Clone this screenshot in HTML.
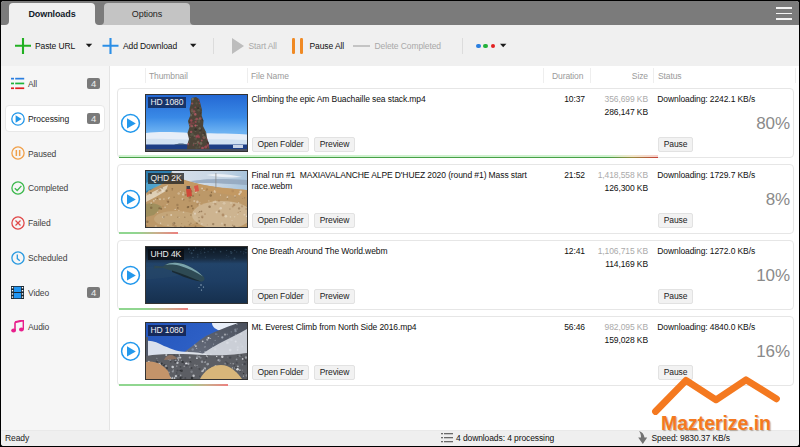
<!DOCTYPE html>
<html><head><meta charset="utf-8">
<style>
*{margin:0;padding:0;box-sizing:border-box}
html,body{width:800px;height:447px;overflow:hidden;background:#000}
body{font-family:"Liberation Sans",sans-serif;font-size:8.5px;color:#101010;position:relative;letter-spacing:-0.1px}
.a{position:absolute}
.t{position:absolute;white-space:nowrap;line-height:10px}
#win{left:1px;top:1px;width:798px;height:445px;background:#f0f0f0;border-radius:3px;overflow:hidden}
#tabbar{left:1px;top:1px;width:798px;height:24px;background:#7b7b7b;border-radius:3px 3px 0 0}
.tab{top:3px;height:22px;border-radius:4px 4px 0 0;text-align:center;line-height:22px;font-size:9px}
#sidebar{left:1px;top:66px;width:109px;height:364px;background:#f6f6f6;border-right:1px solid #e4e4e4}
#content{left:110px;top:66px;width:689px;height:364px;background:#fff}
#status{left:1px;top:430px;width:798px;height:16px;background:#efefef;border-top:1px solid #e9e9e9;border-radius:0 0 3px 3px}
.hdr{color:#9a9a9a;top:71px}
.dv{width:1px;height:15px;background:#eeeeee;top:68px}
.card{left:117px;width:677px;height:70px;border:1px solid #e6e6e6;border-radius:4px;background:#fff}
.btn{height:15px;border:1px solid #e2e2e2;border-radius:2px;background:#f2f2f2;line-height:13px;text-align:center;color:#222}
.thumb{left:145px;width:103px;height:58px;border:1px solid #333;overflow:hidden}
.lbl{position:absolute;left:2px;top:2px;height:11px;padding:0 2.5px;background:rgba(10,20,50,.72);color:#f0f0f0;font-size:8.5px;line-height:11px;white-space:nowrap}
.pct{font-size:17px;color:#8a8a8a;text-align:right;line-height:18px}
.badge{left:87px;width:13px;height:11px;background:#7a7a7a;border-radius:2px;color:#eee;text-align:center;line-height:11px;font-size:9.5px;font-weight:normal}
.prog{height:1px;left:119px}
.glow{height:2px;left:119px;opacity:.55}
.prog2{height:2px;left:119px;background:linear-gradient(to right,#90d690 0,#90d690 calc(100% - 42px),#c8b08c calc(100% - 22px),#ec8080 100%)}
.gray{color:#aaa}
.prog{background:linear-gradient(to right,#48a048 0,#48a048 calc(100% - 50px),#9a8a40 calc(100% - 25px),#c84038 100%)}
.glow{background:linear-gradient(to right,#a8e8a8 0,#a8e8a8 calc(100% - 50px),#e8d0a0 calc(100% - 25px),#f0a8a0 100%)}
.sl{left:28px;color:#3e3e3e}
</style></head><body>
<div id="win" class="a"></div>
<div id="tabbar" class="a"></div>
<div class="a tab" style="left:9px;width:86px;background:#f0f0f0;font-weight:bold;color:#12202a">Downloads</div>
<div class="a tab" style="left:104px;width:86px;background:#c4c4c4;color:#1e1e1e">Options</div>
<div class="a" style="left:5px;top:21px;width:4px;height:4px;background:#f0f0f0"><div style="width:4px;height:4px;background:#7b7b7b;border-bottom-right-radius:4px"></div></div>
<div class="a" style="left:95px;top:21px;width:4px;height:4px;background:#f0f0f0"><div style="width:4px;height:4px;background:#7b7b7b;border-bottom-left-radius:4px"></div></div>
<div class="a" style="left:100px;top:21px;width:4px;height:4px;background:#c4c4c4"><div style="width:4px;height:4px;background:#7b7b7b;border-bottom-right-radius:4px"></div></div>
<div class="a" style="left:190px;top:21px;width:4px;height:4px;background:#c4c4c4"><div style="width:4px;height:4px;background:#7b7b7b;border-bottom-left-radius:4px"></div></div>
<div class="a" style="left:776px;top:7px;width:16px;height:2px;background:#f4f4f4"></div>
<div class="a" style="left:776px;top:12.5px;width:16px;height:1.8px;background:#f4f4f4"></div>
<div class="a" style="left:776px;top:18px;width:16px;height:2px;background:#f4f4f4"></div>

<!-- toolbar -->
<svg class="a" style="left:15px;top:38px" width="16" height="16"><path d="M0 7.7H16M8 0V16" stroke="#22b022" stroke-width="2.1"/></svg>
<div class="t" style="left:35px;top:40.7px">Paste URL</div>
<svg class="a" style="left:85px;top:43px" width="8" height="6"><path d="M0.8 0.8H7.2L4 4.3Z" fill="#1a1a1a"/></svg>
<svg class="a" style="left:102px;top:38px" width="17" height="16"><path d="M0.5 7.7H16.5M8.5 0V16" stroke="#2b8ee6" stroke-width="2.1"/></svg>
<div class="t" style="left:123px;top:40.7px">Add Download</div>
<svg class="a" style="left:189px;top:43px" width="8" height="6"><path d="M1 0.8H7.4L4.2 4.3Z" fill="#1a1a1a"/></svg>
<div class="a" style="left:213px;top:38px;width:1px;height:16px;background:#dcdcdc"></div>
<svg class="a" style="left:232px;top:38px" width="12" height="16"><path d="M0 0L12 8L0 16Z" fill="#bdbdbd"/></svg>
<div class="t" style="left:248.5px;top:40.7px;color:#a8a8a8">Start All</div>
<div class="a" style="left:292px;top:38px;width:2.5px;height:16px;background:#f08a24;border-radius:1.2px"></div>
<div class="a" style="left:300.2px;top:38px;width:2.5px;height:16px;background:#f08a24;border-radius:1.2px"></div>
<div class="t" style="left:309.5px;top:40.7px">Pause All</div>
<div class="a" style="left:353px;top:45px;width:17px;height:2px;background:#c4c4c4"></div>
<div class="t" style="left:374.5px;top:40.7px;color:#a8a8a8">Delete Completed</div>
<div class="a" style="left:462px;top:38px;width:1px;height:16px;background:#dcdcdc"></div>
<div class="a" style="left:476.2px;top:43.5px;width:4.4px;height:4.4px;border-radius:50%;background:#2a7fe0"></div>
<div class="a" style="left:483.4px;top:43.5px;width:4.4px;height:4.4px;border-radius:50%;background:#22b23a"></div>
<div class="a" style="left:490.6px;top:43.5px;width:4.4px;height:4.4px;border-radius:50%;background:#e22020"></div>
<svg class="a" style="left:499px;top:43px" width="8" height="6"><path d="M1 0.8H7.4L4.2 4.3Z" fill="#1a1a1a"/></svg>

<div id="sidebar" class="a"></div>
<div id="content" class="a"></div>
<div id="status" class="a"></div>
<div class="a" style="left:5px;top:105px;width:100px;height:27px;background:#fff;border:1px solid #e8e8e8;border-radius:4px"></div>
<svg class="a" style="left:11px;top:77px" width="14" height="13">
 <rect x="0" y="0.8" width="3" height="1.7" fill="#2a7fe0"/><rect x="4.2" y="0.8" width="9" height="1.7" fill="#2a7fe0"/>
 <rect x="0" y="5.6" width="3" height="1.7" fill="#22b23a"/><rect x="4.2" y="5.6" width="9" height="1.7" fill="#22b23a"/>
 <rect x="0" y="10.4" width="3" height="1.7" fill="#e22020"/><rect x="4.2" y="10.4" width="9" height="1.7" fill="#e22020"/>
</svg>
<div class="t sl" style="top:79px">All</div>
<div class="a badge" style="top:78px">4</div>
<svg class="a" style="left:10.5px;top:111.5px" width="14" height="14"><circle cx="7" cy="7" r="6.2" fill="none" stroke="#2196e8" stroke-width="1.3"/><path d="M4.6 3.3L10.6 7L4.6 10.7Z" fill="#2196e8"/></svg>
<div class="t sl" style="top:114px;color:#1a1a1a">Processing</div>
<div class="a badge" style="top:113px">4</div>
<svg class="a" style="left:10.5px;top:146px" width="14" height="14"><circle cx="7" cy="7" r="6.1" fill="none" stroke="#f0a04a" stroke-width="1.3"/><rect x="4.6" y="4" width="1.5" height="6" fill="#f0a04a"/><rect x="7.9" y="4" width="1.5" height="6" fill="#f0a04a"/></svg>
<div class="t sl" style="top:148.5px">Paused</div>
<svg class="a" style="left:10.5px;top:180.5px" width="14" height="14"><circle cx="7" cy="7" r="6.1" fill="none" stroke="#3cb84c" stroke-width="1.3"/><path d="M3.8 7.2L6.2 9.5L10.4 4.9" fill="none" stroke="#3cb84c" stroke-width="1.3"/></svg>
<div class="t sl" style="top:183px">Completed</div>
<svg class="a" style="left:10.5px;top:215.5px" width="14" height="14"><circle cx="7" cy="7" r="6.1" fill="none" stroke="#e04848" stroke-width="1.3"/><path d="M4.5 4.5L9.5 9.5M9.5 4.5L4.5 9.5" fill="none" stroke="#e04848" stroke-width="1.2"/></svg>
<div class="t sl" style="top:218px">Failed</div>
<svg class="a" style="left:10.5px;top:250.5px" width="14" height="14"><circle cx="7" cy="7" r="6.1" fill="none" stroke="#2a9ae0" stroke-width="1.3"/><path d="M6.3 3.5V7.6L8.8 9.8" fill="none" stroke="#2a9ae0" stroke-width="1.3"/></svg>
<div class="t sl" style="top:253px">Scheduled</div>
<svg class="a" style="left:11px;top:286px" width="13" height="13"><rect x="0" y="0" width="13" height="13" fill="#1b2a36"/><rect x="3" y="0.8" width="7" height="5.2" fill="#2196f3"/><rect x="3" y="7" width="7" height="5.2" fill="#2196f3"/>
<rect x="0.8" y="1" width="1.4" height="1.4" fill="#fff"/><rect x="0.8" y="4" width="1.4" height="1.4" fill="#fff"/><rect x="0.8" y="7.2" width="1.4" height="1.4" fill="#fff"/><rect x="0.8" y="10.4" width="1.4" height="1.4" fill="#fff"/>
<rect x="10.8" y="1" width="1.4" height="1.4" fill="#fff"/><rect x="10.8" y="4" width="1.4" height="1.4" fill="#fff"/><rect x="10.8" y="7.2" width="1.4" height="1.4" fill="#fff"/><rect x="10.8" y="10.4" width="1.4" height="1.4" fill="#fff"/></svg>
<div class="t sl" style="top:288px">Video</div>
<div class="a badge" style="top:287px">4</div>
<svg class="a" style="left:11px;top:320px" width="13" height="13"><path d="M4 2.2L12.6 0.2V9.6" fill="none" stroke="#e8208c" stroke-width="2"/><ellipse cx="2.6" cy="10.6" rx="2.4" ry="2" fill="#e8208c"/><ellipse cx="10.4" cy="9.6" rx="2.4" ry="2" fill="#e8208c"/><path d="M4 2.2V10.6" stroke="#e8208c" stroke-width="1.6"/></svg>
<div class="t sl" style="top:322px">Audio</div>
<div class="a dv" style="left:145px"></div>
<div class="t hdr" style="left:149px">Thumbnail</div>
<div class="a dv" style="left:247px"></div>
<div class="t hdr" style="left:251px">File Name</div>
<div class="a dv" style="left:543px"></div>
<div class="t hdr" style="left:552px">Duration</div>
<div class="a dv" style="left:590px"></div>
<div class="t hdr" style="right:152px">Size</div>
<div class="a dv" style="left:653px"></div>
<div class="t hdr" style="left:658px">Status</div>
<div class="a dv" style="left:795px"></div>
<div class="a card" style="top:88px"></div>
<svg class="a" style="left:120px;top:113px" width="21" height="21"><circle cx="10.5" cy="10.3" r="8.9" fill="none" stroke="#2298ec" stroke-width="1.5"/><path d="M7 5.2L15.8 10.4L7 15.6Z" fill="#2298ec"/></svg>
<div class="a thumb t1" style="top:94px"><svg class="a" style="left:0;top:0" width="101" height="56" viewBox="0 0 101 56"><defs><clipPath id="rc"><path d="M45.5 3L50 2L53 4L54.5 9L56 15L55.5 20L57.5 26L57 31L60 37L61 43L63 49L63.5 54H41L41.5 49L43 44L41.5 38L43.5 32L42 26L44.5 20L43.5 14L45 8Z"/></clipPath><linearGradient id="g1" x1="0" y1="0" x2="0" y2="1"><stop offset="0" stop-color="#2468d4"/><stop offset="0.4" stop-color="#3a8ae6"/><stop offset="0.66" stop-color="#6cb2f2"/></linearGradient></defs><rect width="101" height="56" fill="url(#g1)"/><path d="M0 38C12 36.5 28 37 44 38C62 38.5 80 38 101 39.5V50H0Z" fill="#e6eef8"/><path d="M0 44C20 43 40 45 60 44.5S90 45 101 45V50H0Z" fill="#c8dcf0" opacity=".7"/><rect y="49.5" width="101" height="6.5" fill="#1d3e86"/><path d="M28 50C32 48 38 48 42 50Z" fill="#405a80"/><rect y="54" width="101" height="2" fill="#4a5060"/><path d="M45.5 3L50 2L53 4L54.5 9L56 15L55.5 20L57.5 26L57 31L60 37L61 43L63 49L63.5 54H41L41.5 49L43 44L41.5 38L43.5 32L42 26L44.5 20L43.5 14L45 8Z" fill="#4c4438"/><g clip-path="url(#rc)"><circle cx="46.5" cy="31.4" r="0.9" fill="#7a7460" opacity="0.71"/><circle cx="54.4" cy="34.7" r="1.4" fill="#2e2c28" opacity="0.62"/><circle cx="46.4" cy="55.8" r="1.0" fill="#6a6450" opacity="0.75"/><circle cx="50.1" cy="48.5" r="0.8" fill="#c05868" opacity="0.89"/><circle cx="53.0" cy="42.0" r="1.2" fill="#b04a5c" opacity="0.57"/><circle cx="63.0" cy="4.3" r="1.3" fill="#6a6450" opacity="0.89"/><circle cx="51.9" cy="40.8" r="1.4" fill="#a04050" opacity="0.85"/><circle cx="50.8" cy="41.3" r="1.1" fill="#c05868" opacity="0.90"/><circle cx="43.2" cy="9.3" r="0.8" fill="#a04050" opacity="0.70"/><circle cx="55.4" cy="18.3" r="1.1" fill="#2e2c28" opacity="0.76"/><circle cx="53.3" cy="24.0" r="0.8" fill="#5a5a48" opacity="0.81"/><circle cx="62.4" cy="48.2" r="1.5" fill="#a04050" opacity="0.81"/><circle cx="57.1" cy="19.6" r="1.1" fill="#7a7460" opacity="0.76"/><circle cx="57.4" cy="13.4" r="1.3" fill="#7a7460" opacity="0.62"/><circle cx="43.9" cy="28.0" r="1.2" fill="#2e2c28" opacity="0.54"/><circle cx="59.4" cy="24.2" r="0.7" fill="#5a5a48" opacity="0.69"/><circle cx="50.5" cy="8.4" r="1.1" fill="#6a6450" opacity="0.52"/><circle cx="57.5" cy="19.9" r="1.4" fill="#5a5a48" opacity="0.73"/><circle cx="64.0" cy="18.7" r="0.7" fill="#7a7460" opacity="0.74"/><circle cx="62.8" cy="54.5" r="0.9" fill="#5a5a48" opacity="0.57"/><circle cx="42.0" cy="48.9" r="0.9" fill="#c05868" opacity="0.90"/><circle cx="49.7" cy="26.9" r="1.1" fill="#a04050" opacity="0.89"/><circle cx="56.7" cy="7.5" r="1.5" fill="#6a6450" opacity="0.73"/><circle cx="50.9" cy="40.9" r="0.8" fill="#5a5a48" opacity="0.70"/><circle cx="46.9" cy="18.4" r="0.9" fill="#6a6450" opacity="0.69"/><circle cx="54.3" cy="3.1" r="1.2" fill="#a04050" opacity="0.56"/><circle cx="55.6" cy="20.0" r="0.9" fill="#5a5a48" opacity="0.77"/><circle cx="47.4" cy="28.4" r="1.1" fill="#a04050" opacity="0.51"/><circle cx="49.5" cy="35.9" r="0.9" fill="#7a7460" opacity="0.64"/><circle cx="49.4" cy="18.9" r="0.9" fill="#7a7460" opacity="0.62"/><circle cx="59.1" cy="7.7" r="1.3" fill="#7a7460" opacity="0.81"/><circle cx="44.0" cy="29.0" r="1.2" fill="#5a5a48" opacity="0.61"/><circle cx="45.3" cy="25.5" r="1.2" fill="#b04a5c" opacity="0.77"/><circle cx="62.8" cy="38.4" r="0.8" fill="#6a6450" opacity="0.88"/><circle cx="44.9" cy="20.2" r="1.2" fill="#7a7460" opacity="0.70"/><circle cx="46.2" cy="8.5" r="1.1" fill="#c05868" opacity="0.64"/><circle cx="60.2" cy="33.0" r="1.4" fill="#5a5a48" opacity="0.86"/><circle cx="55.8" cy="45.5" r="0.9" fill="#c05868" opacity="0.69"/><circle cx="52.9" cy="47.9" r="1.0" fill="#a04050" opacity="0.69"/><circle cx="50.7" cy="24.1" r="1.4" fill="#c05868" opacity="0.59"/><circle cx="52.0" cy="47.0" r="1.2" fill="#7a7460" opacity="0.70"/><circle cx="62.9" cy="52.1" r="0.8" fill="#a04050" opacity="0.71"/><circle cx="58.3" cy="42.4" r="1.5" fill="#7a7460" opacity="0.65"/><circle cx="46.2" cy="5.7" r="1.1" fill="#5a5a48" opacity="0.55"/><circle cx="46.6" cy="3.9" r="1.3" fill="#7a7460" opacity="0.92"/><circle cx="61.6" cy="50.6" r="1.1" fill="#b04a5c" opacity="0.72"/><circle cx="43.8" cy="29.2" r="0.8" fill="#b04a5c" opacity="0.74"/><circle cx="50.5" cy="52.7" r="1.2" fill="#5a5a48" opacity="0.56"/><circle cx="63.4" cy="31.2" r="1.3" fill="#b04a5c" opacity="0.66"/><circle cx="45.5" cy="30.9" r="1.3" fill="#c05868" opacity="0.61"/><circle cx="47.3" cy="50.0" r="0.7" fill="#b04a5c" opacity="0.72"/><circle cx="54.1" cy="23.6" r="1.3" fill="#c05868" opacity="0.62"/><circle cx="53.1" cy="24.8" r="1.0" fill="#6a6450" opacity="0.87"/><circle cx="60.7" cy="43.9" r="0.6" fill="#b04a5c" opacity="0.53"/><circle cx="63.4" cy="48.1" r="0.7" fill="#7a7460" opacity="0.72"/><circle cx="44.6" cy="5.9" r="0.9" fill="#2e2c28" opacity="0.76"/><circle cx="49.3" cy="12.3" r="0.9" fill="#b04a5c" opacity="0.56"/><circle cx="41.1" cy="41.0" r="1.3" fill="#7a7460" opacity="0.58"/><circle cx="49.6" cy="34.6" r="1.3" fill="#2e2c28" opacity="0.79"/><circle cx="42.0" cy="49.9" r="0.6" fill="#a04050" opacity="0.72"/><circle cx="57.2" cy="24.7" r="1.2" fill="#2e2c28" opacity="0.51"/><circle cx="46.0" cy="16.6" r="1.1" fill="#6a6450" opacity="0.69"/><circle cx="50.8" cy="49.5" r="1.4" fill="#5a5a48" opacity="0.94"/><circle cx="53.9" cy="49.0" r="0.7" fill="#a04050" opacity="0.56"/><circle cx="59.7" cy="37.8" r="1.4" fill="#6a6450" opacity="0.67"/><circle cx="43.5" cy="19.2" r="1.1" fill="#6a6450" opacity="0.76"/><circle cx="41.1" cy="9.7" r="1.3" fill="#b04a5c" opacity="0.74"/><circle cx="54.0" cy="37.6" r="0.9" fill="#6a6450" opacity="0.51"/><circle cx="60.4" cy="8.5" r="1.4" fill="#a04050" opacity="0.72"/><circle cx="57.0" cy="17.4" r="0.9" fill="#b04a5c" opacity="0.52"/><circle cx="58.7" cy="29.6" r="1.2" fill="#b04a5c" opacity="0.75"/><circle cx="43.3" cy="31.9" r="1.1" fill="#6a6450" opacity="0.75"/><circle cx="60.0" cy="15.1" r="0.8" fill="#c05868" opacity="0.70"/><circle cx="57.1" cy="52.9" r="0.8" fill="#7a7460" opacity="0.68"/><circle cx="49.1" cy="24.6" r="0.7" fill="#7a7460" opacity="0.61"/><circle cx="62.4" cy="47.6" r="1.5" fill="#2e2c28" opacity="0.81"/><circle cx="58.4" cy="38.4" r="1.1" fill="#2e2c28" opacity="0.57"/><circle cx="50.2" cy="49.9" r="0.7" fill="#2e2c28" opacity="0.84"/><circle cx="62.1" cy="29.9" r="1.0" fill="#a04050" opacity="0.89"/><circle cx="44.1" cy="42.6" r="0.7" fill="#7a7460" opacity="0.64"/><circle cx="46.3" cy="39.3" r="1.5" fill="#5a5a48" opacity="0.80"/><circle cx="60.7" cy="34.1" r="1.1" fill="#5a5a48" opacity="0.90"/><circle cx="48.1" cy="16.5" r="1.3" fill="#c05868" opacity="0.58"/><circle cx="49.3" cy="19.4" r="1.3" fill="#c05868" opacity="0.69"/><circle cx="57.0" cy="39.9" r="0.8" fill="#7a7460" opacity="0.88"/><circle cx="59.9" cy="32.1" r="1.0" fill="#a04050" opacity="0.53"/><circle cx="62.8" cy="44.3" r="1.4" fill="#b04a5c" opacity="0.71"/><circle cx="46.3" cy="14.7" r="1.2" fill="#a04050" opacity="0.53"/><circle cx="46.0" cy="15.7" r="1.4" fill="#6a6450" opacity="0.62"/><circle cx="45.3" cy="40.1" r="1.4" fill="#5a5a48" opacity="0.58"/><circle cx="42.0" cy="11.9" r="0.7" fill="#6a6450" opacity="0.54"/><circle cx="43.1" cy="47.0" r="0.9" fill="#5a5a48" opacity="0.70"/><circle cx="57.9" cy="20.2" r="0.6" fill="#5a5a48" opacity="0.70"/><circle cx="52.2" cy="13.3" r="1.1" fill="#2e2c28" opacity="0.68"/><circle cx="53.5" cy="8.4" r="0.8" fill="#a04050" opacity="0.69"/><circle cx="51.1" cy="30.5" r="0.8" fill="#7a7460" opacity="0.92"/><circle cx="49.6" cy="43.7" r="1.3" fill="#5a5a48" opacity="0.80"/><circle cx="56.4" cy="53.0" r="1.3" fill="#b04a5c" opacity="0.84"/><circle cx="63.1" cy="38.3" r="1.1" fill="#b04a5c" opacity="0.80"/><circle cx="52.7" cy="5.2" r="0.9" fill="#a04050" opacity="0.75"/><circle cx="45.2" cy="36.9" r="1.2" fill="#c05868" opacity="0.67"/><circle cx="62.2" cy="26.5" r="0.7" fill="#7a7460" opacity="0.56"/><circle cx="48.6" cy="40.9" r="1.1" fill="#7a7460" opacity="0.64"/><circle cx="45.3" cy="28.0" r="1.3" fill="#a04050" opacity="0.53"/><circle cx="57.5" cy="42.7" r="1.1" fill="#a04050" opacity="0.68"/><circle cx="43.3" cy="16.6" r="0.6" fill="#c05868" opacity="0.52"/><circle cx="52.6" cy="15.3" r="1.3" fill="#5a5a48" opacity="0.89"/><circle cx="62.7" cy="26.2" r="1.3" fill="#b04a5c" opacity="0.66"/><circle cx="60.5" cy="8.1" r="0.8" fill="#b04a5c" opacity="0.81"/><circle cx="54.0" cy="51.1" r="0.7" fill="#a04050" opacity="0.59"/><circle cx="50.6" cy="42.1" r="1.3" fill="#a04050" opacity="0.56"/><circle cx="55.0" cy="48.4" r="1.3" fill="#7a7460" opacity="0.74"/><circle cx="54.1" cy="12.9" r="0.8" fill="#6a6450" opacity="0.63"/><circle cx="60.4" cy="26.0" r="1.0" fill="#6a6450" opacity="0.67"/><circle cx="53.7" cy="33.5" r="1.2" fill="#7a7460" opacity="0.81"/><circle cx="47.9" cy="48.4" r="1.0" fill="#7a7460" opacity="0.59"/><circle cx="55.6" cy="7.8" r="1.3" fill="#c05868" opacity="0.72"/><circle cx="53.0" cy="26.9" r="0.8" fill="#7a7460" opacity="0.60"/><circle cx="59.7" cy="52.0" r="1.5" fill="#b04a5c" opacity="0.75"/><circle cx="63.1" cy="50.2" r="0.7" fill="#6a6450" opacity="0.54"/><circle cx="62.2" cy="3.4" r="1.2" fill="#7a7460" opacity="0.54"/><circle cx="53.4" cy="52.2" r="0.9" fill="#6a6450" opacity="0.65"/><circle cx="56.9" cy="6.3" r="1.4" fill="#6a6450" opacity="0.92"/><circle cx="57.5" cy="41.9" r="0.9" fill="#6a6450" opacity="0.59"/><circle cx="42.5" cy="12.8" r="1.2" fill="#c05868" opacity="0.72"/><circle cx="43.5" cy="4.3" r="0.7" fill="#c05868" opacity="0.82"/><circle cx="50.0" cy="27.6" r="0.7" fill="#6a6450" opacity="0.69"/><circle cx="55.9" cy="18.5" r="1.0" fill="#6a6450" opacity="0.81"/><circle cx="51.1" cy="26.6" r="0.6" fill="#5a5a48" opacity="0.67"/><circle cx="49.5" cy="30.6" r="1.1" fill="#c05868" opacity="0.94"/></g><rect x="87" y="50" width="10" height="3" fill="#e8eef8" opacity=".85"/></svg><div class="lbl" style="background:rgba(18,38,80,.82)">HD 1080</div></div>
<div class="t" style="left:251.5px;top:94.3px;line-height:10.5px">Climbing the epic Am Buachaille sea stack.mp4</div>
<div class="a btn" style="left:252px;top:137px;width:57px">Open Folder</div>
<div class="a btn" style="left:314px;top:137px;width:41px">Preview</div>
<div class="t" style="right:215px;top:94.2px">10:37</div>
<div class="t gray" style="right:152px;top:94.2px">356,699 KB</div>
<div class="t" style="right:152px;top:106.5px">286,147 KB</div>
<div class="t" style="left:657.3px;top:94.2px">Downloading: 2242.1 KB/s</div>
<div class="t pct" style="right:10px;top:114.5px">80%</div>
<div class="a btn" style="left:658px;top:137px;width:35px">Pause</div>
<div class="a glow" style="top:155px;width:539px"></div><div class="a prog" style="top:157px;width:539px"></div>
<div class="a card" style="top:164px"></div>
<svg class="a" style="left:120px;top:189px" width="21" height="21"><circle cx="10.5" cy="10.3" r="8.9" fill="none" stroke="#2298ec" stroke-width="1.5"/><path d="M7 5.2L15.8 10.4L7 15.6Z" fill="#2298ec"/></svg>
<div class="a thumb t2" style="top:170px"><svg class="a" style="left:0;top:0" width="101" height="56" viewBox="0 0 101 56"><defs><linearGradient id="g2" x1="0" y1="0" x2="1" y2="1"><stop offset="0" stop-color="#b08858"/><stop offset="0.5" stop-color="#c4a070"/><stop offset="1" stop-color="#d8c4a4"/></linearGradient><linearGradient id="g2s" x1="0" y1="0" x2="1" y2="0"><stop offset="0" stop-color="#d8e0ea"/><stop offset="0.6" stop-color="#c8d6e4"/><stop offset="1" stop-color="#a8c4dc"/></linearGradient></defs><rect width="101" height="56" fill="url(#g2)"/><path d="M24 0H101V19L76 17L56 14L36 9Z" fill="url(#g2s)"/><path d="M44 10C58 8 74 7 101 9V14C88 13 70 12 50 12Z" fill="#90a4bc" opacity=".8"/><path d="M60 4C70 2 82 3 96 6C84 7 72 6 60 4Z" fill="#f4f6fa" opacity=".8"/><path d="M0 0H26C24 5 20 10 12 14C7 17 3 20 0 22Z" fill="#2e7eb0"/><path d="M0 12C6 9 14 11 22 8C17 14 8 17 0 20Z" fill="#58acd4" opacity=".8"/><path d="M0 23C8 18 18 12 28 7L36 8C48 12 60 15 76 17C88 18 96 19 101 19V56H0Z" fill="#bc9868"/><path d="M36 9C50 13 66 16 101 19V26C80 24 60 20 40 14Z" fill="#c89a60" opacity=".6"/><path d="M0 25C6 21 14 17 22 14L20 20C13 24 6 28 0 31Z" fill="#e4d8c4" opacity=".85"/><path d="M0 33C6 31 12 33 16 36L8 44L0 46Z" fill="#7c8650" opacity=".45"/><ellipse cx="76" cy="44" rx="30" ry="14" fill="#e2d6c0" opacity=".45"/><ellipse cx="30" cy="48" rx="22" ry="8" fill="#d8c6a4" opacity=".3"/><circle cx="81.2" cy="26.3" r="0.8" fill="#f0e8dc" opacity="0.49"/><circle cx="16.1" cy="16.9" r="1.0" fill="#6a5030" opacity="0.36"/><circle cx="2.8" cy="20.4" r="0.7" fill="#f0e8dc" opacity="0.36"/><circle cx="85.0" cy="32.1" r="0.8" fill="#eadfca" opacity="0.55"/><circle cx="5.2" cy="32.1" r="0.9" fill="#eadfca" opacity="0.62"/><circle cx="89.2" cy="25.7" r="0.9" fill="#7a5a3a" opacity="0.36"/><circle cx="62.9" cy="29.9" r="0.6" fill="#eadfca" opacity="0.58"/><circle cx="29.4" cy="55.3" r="1.3" fill="#a07850" opacity="0.47"/><circle cx="56.7" cy="17.2" r="0.8" fill="#a07850" opacity="0.41"/><circle cx="5.7" cy="33.4" r="0.6" fill="#6a5030" opacity="0.30"/><circle cx="3.1" cy="19.6" r="0.7" fill="#eadfca" opacity="0.47"/><circle cx="19.1" cy="36.4" r="0.8" fill="#f0e8dc" opacity="0.42"/><circle cx="48.3" cy="30.1" r="1.1" fill="#f0e8dc" opacity="0.41"/><circle cx="61.3" cy="53.9" r="0.6" fill="#a07850" opacity="0.36"/><circle cx="41.7" cy="36.3" r="1.0" fill="#6a5030" opacity="0.54"/><circle cx="93.8" cy="23.0" r="1.2" fill="#f0e8dc" opacity="0.59"/><circle cx="55.9" cy="52.9" r="0.8" fill="#f0e8dc" opacity="0.45"/><circle cx="44.9" cy="44.1" r="0.8" fill="#7a5a3a" opacity="0.48"/><circle cx="76.0" cy="52.6" r="1.1" fill="#f0e8dc" opacity="0.31"/><circle cx="17.3" cy="46.1" r="1.2" fill="#eadfca" opacity="0.57"/><circle cx="68.4" cy="19.9" r="0.7" fill="#eadfca" opacity="0.61"/><circle cx="88.1" cy="34.0" r="1.3" fill="#a07850" opacity="0.65"/><circle cx="0.2" cy="23.8" r="1.2" fill="#eadfca" opacity="0.42"/><circle cx="31.4" cy="34.0" r="1.2" fill="#7a5a3a" opacity="0.38"/><circle cx="4.9" cy="22.1" r="1.1" fill="#6a5030" opacity="0.64"/><circle cx="11.3" cy="27.5" r="0.7" fill="#6a5030" opacity="0.48"/><circle cx="51.0" cy="52.3" r="0.8" fill="#6a5030" opacity="0.57"/><circle cx="47.2" cy="40.9" r="0.5" fill="#eadfca" opacity="0.51"/><circle cx="86.7" cy="20.1" r="1.3" fill="#a07850" opacity="0.33"/><circle cx="47.0" cy="24.9" r="1.2" fill="#6a5030" opacity="0.34"/><circle cx="49.0" cy="42.7" r="1.1" fill="#f0e8dc" opacity="0.51"/><circle cx="45.0" cy="20.4" r="1.3" fill="#6a5030" opacity="0.46"/><circle cx="38.3" cy="20.7" r="0.5" fill="#a07850" opacity="0.55"/><circle cx="7.8" cy="29.8" r="0.9" fill="#eadfca" opacity="0.62"/><circle cx="69.3" cy="30.6" r="1.2" fill="#eadfca" opacity="0.51"/><circle cx="21.6" cy="30.0" r="1.4" fill="#a07850" opacity="0.38"/><circle cx="44.3" cy="26.0" r="0.8" fill="#7a5a3a" opacity="0.55"/><circle cx="88.3" cy="55.5" r="1.1" fill="#6a5030" opacity="0.60"/><circle cx="37.1" cy="23.6" r="1.1" fill="#f0e8dc" opacity="0.47"/><circle cx="78.1" cy="32.3" r="1.4" fill="#eadfca" opacity="0.40"/><circle cx="94.4" cy="23.4" r="0.6" fill="#7a5a3a" opacity="0.40"/><circle cx="52.5" cy="41.6" r="0.5" fill="#7a5a3a" opacity="0.40"/><circle cx="43.7" cy="29.8" r="1.2" fill="#a07850" opacity="0.35"/><circle cx="44.9" cy="52.3" r="0.9" fill="#7a5a3a" opacity="0.35"/><circle cx="77.0" cy="44.0" r="1.4" fill="#a07850" opacity="0.63"/><circle cx="43.6" cy="53.6" r="0.9" fill="#6a5030" opacity="0.38"/><circle cx="96.6" cy="27.5" r="0.5" fill="#a07850" opacity="0.61"/><circle cx="81.5" cy="27.9" r="0.7" fill="#6a5030" opacity="0.30"/><circle cx="13.3" cy="37.2" r="1.0" fill="#7a5a3a" opacity="0.63"/><circle cx="0.2" cy="55.3" r="1.2" fill="#a07850" opacity="0.64"/><circle cx="79.3" cy="55.2" r="0.5" fill="#7a5a3a" opacity="0.38"/><circle cx="28.0" cy="52.2" r="1.3" fill="#6a5030" opacity="0.49"/><circle cx="9.5" cy="28.5" r="0.7" fill="#f0e8dc" opacity="0.45"/><circle cx="26.3" cy="17.8" r="0.9" fill="#7a5a3a" opacity="0.62"/><circle cx="81.7" cy="25.9" r="0.6" fill="#f0e8dc" opacity="0.48"/><circle cx="83.9" cy="38.1" r="0.8" fill="#7a5a3a" opacity="0.32"/><circle cx="49.1" cy="18.4" r="1.2" fill="#f0e8dc" opacity="0.46"/><circle cx="67.2" cy="53.1" r="1.2" fill="#6a5030" opacity="0.48"/><circle cx="37.5" cy="41.3" r="0.8" fill="#eadfca" opacity="0.54"/><circle cx="100.2" cy="37.9" r="0.9" fill="#a07850" opacity="0.46"/><circle cx="28.1" cy="26.2" r="0.8" fill="#6a5030" opacity="0.35"/><circle cx="31.8" cy="36.9" r="0.9" fill="#7a5a3a" opacity="0.59"/><circle cx="94.1" cy="40.5" r="0.5" fill="#6a5030" opacity="0.51"/><circle cx="11.7" cy="21.0" r="1.2" fill="#a07850" opacity="0.34"/><circle cx="67.5" cy="30.9" r="1.0" fill="#f0e8dc" opacity="0.37"/><circle cx="93.0" cy="23.2" r="0.8" fill="#f0e8dc" opacity="0.41"/><circle cx="27.4" cy="54.0" r="1.3" fill="#a07850" opacity="0.51"/><circle cx="56.1" cy="17.4" r="0.9" fill="#f0e8dc" opacity="0.64"/><circle cx="8.0" cy="25.2" r="0.7" fill="#eadfca" opacity="0.54"/><circle cx="11.6" cy="41.3" r="0.6" fill="#eadfca" opacity="0.63"/><circle cx="98.4" cy="43.7" r="0.9" fill="#f0e8dc" opacity="0.46"/><circle cx="29.2" cy="38.4" r="0.7" fill="#f0e8dc" opacity="0.64"/><circle cx="14.6" cy="52.2" r="0.7" fill="#f0e8dc" opacity="0.54"/><circle cx="65.3" cy="21.7" r="0.5" fill="#7a5a3a" opacity="0.41"/><circle cx="65.5" cy="21.2" r="0.6" fill="#6a5030" opacity="0.64"/><circle cx="54.0" cy="31.3" r="0.6" fill="#f0e8dc" opacity="0.36"/><circle cx="2.7" cy="20.2" r="0.6" fill="#a07850" opacity="0.34"/><circle cx="35.6" cy="52.6" r="0.6" fill="#7a5a3a" opacity="0.30"/><circle cx="37.5" cy="21.7" r="0.9" fill="#eadfca" opacity="0.42"/><circle cx="96.0" cy="35.4" r="1.1" fill="#a07850" opacity="0.47"/><circle cx="74.7" cy="37.2" r="1.3" fill="#f0e8dc" opacity="0.50"/><circle cx="46.9" cy="37.5" r="0.9" fill="#6a5030" opacity="0.46"/><circle cx="38.8" cy="46.3" r="0.8" fill="#7a5a3a" opacity="0.41"/><circle cx="86.7" cy="54.4" r="0.8" fill="#7a5a3a" opacity="0.35"/><circle cx="61.0" cy="18.3" r="1.1" fill="#7a5a3a" opacity="0.34"/><circle cx="1.4" cy="50.8" r="1.2" fill="#6a5030" opacity="0.54"/><circle cx="53.0" cy="46.6" r="0.6" fill="#6a5030" opacity="0.50"/><circle cx="32.9" cy="39.6" r="0.7" fill="#f0e8dc" opacity="0.48"/><circle cx="37.7" cy="28.7" r="0.8" fill="#6a5030" opacity="0.57"/><circle cx="73.0" cy="29.8" r="1.1" fill="#a07850" opacity="0.40"/><circle cx="98.6" cy="26.8" r="0.6" fill="#6a5030" opacity="0.38"/><circle cx="100.5" cy="45.2" r="0.7" fill="#f0e8dc" opacity="0.64"/><circle cx="45.7" cy="35.1" r="1.0" fill="#7a5a3a" opacity="0.65"/><circle cx="53.4" cy="33.7" r="1.1" fill="#eadfca" opacity="0.45"/><circle cx="55.5" cy="40.4" r="0.8" fill="#7a5a3a" opacity="0.60"/><circle cx="38.8" cy="55.3" r="0.8" fill="#7a5a3a" opacity="0.32"/><circle cx="49.9" cy="20.7" r="1.2" fill="#f0e8dc" opacity="0.55"/><circle cx="36.5" cy="28.0" r="1.0" fill="#f0e8dc" opacity="0.45"/><circle cx="91.7" cy="43.4" r="0.6" fill="#f0e8dc" opacity="0.35"/><circle cx="22.2" cy="30.8" r="1.1" fill="#7a5a3a" opacity="0.61"/><circle cx="21.1" cy="33.4" r="0.7" fill="#eadfca" opacity="0.49"/><circle cx="93.1" cy="37.4" r="1.2" fill="#7a5a3a" opacity="0.45"/><circle cx="68.9" cy="20.8" r="1.3" fill="#f0e8dc" opacity="0.38"/><circle cx="14.0" cy="28.3" r="1.0" fill="#eadfca" opacity="0.59"/><circle cx="60.5" cy="19.4" r="0.5" fill="#a07850" opacity="0.43"/><circle cx="49.5" cy="55.4" r="0.9" fill="#7a5a3a" opacity="0.44"/><circle cx="51.7" cy="33.3" r="1.1" fill="#a07850" opacity="0.45"/><circle cx="9.8" cy="55.2" r="1.1" fill="#eadfca" opacity="0.32"/><circle cx="88.6" cy="45.8" r="0.8" fill="#eadfca" opacity="0.41"/><circle cx="92.2" cy="41.3" r="0.6" fill="#a07850" opacity="0.53"/><circle cx="89.0" cy="25.0" r="0.8" fill="#f0e8dc" opacity="0.64"/><circle cx="5.2" cy="36.7" r="1.3" fill="#6a5030" opacity="0.48"/><circle cx="58.0" cy="19.4" r="0.7" fill="#f0e8dc" opacity="0.59"/><circle cx="92.7" cy="31.8" r="0.8" fill="#f0e8dc" opacity="0.53"/><circle cx="53.4" cy="24.1" r="0.8" fill="#6a5030" opacity="0.35"/><circle cx="53.7" cy="40.8" r="0.8" fill="#6a5030" opacity="0.60"/><circle cx="74.5" cy="24.1" r="0.6" fill="#f0e8dc" opacity="0.60"/><circle cx="63.6" cy="35.7" r="1.3" fill="#7a5a3a" opacity="0.59"/><circle cx="94.7" cy="20.8" r="1.3" fill="#f0e8dc" opacity="0.59"/><circle cx="31.9" cy="46.2" r="0.8" fill="#7a5a3a" opacity="0.43"/><circle cx="86.0" cy="49.3" r="0.6" fill="#f0e8dc" opacity="0.43"/><circle cx="22.6" cy="27.4" r="0.8" fill="#eadfca" opacity="0.54"/><circle cx="34.4" cy="20.4" r="0.7" fill="#f0e8dc" opacity="0.36"/><circle cx="17.0" cy="35.3" r="0.7" fill="#a07850" opacity="0.51"/><circle cx="17.8" cy="46.0" r="0.9" fill="#6a5030" opacity="0.45"/><circle cx="17.9" cy="28.1" r="0.8" fill="#eadfca" opacity="0.58"/><circle cx="86.8" cy="35.6" r="1.0" fill="#a07850" opacity="0.48"/><circle cx="42.4" cy="35.8" r="0.9" fill="#6a5030" opacity="0.65"/><circle cx="34.9" cy="55.8" r="0.9" fill="#7a5a3a" opacity="0.34"/><circle cx="42.3" cy="50.6" r="0.6" fill="#a07850" opacity="0.34"/><circle cx="53.3" cy="50.0" r="0.9" fill="#6a5030" opacity="0.35"/><circle cx="93.1" cy="31.0" r="0.5" fill="#a07850" opacity="0.59"/><circle cx="20.5" cy="19.7" r="1.2" fill="#6a5030" opacity="0.51"/><circle cx="59.0" cy="43.1" r="0.8" fill="#a07850" opacity="0.65"/><circle cx="84.4" cy="45.9" r="0.8" fill="#eadfca" opacity="0.45"/><circle cx="56.4" cy="46.6" r="0.9" fill="#a07850" opacity="0.50"/><circle cx="25.2" cy="43.9" r="1.0" fill="#f0e8dc" opacity="0.55"/><circle cx="32.7" cy="22.5" r="1.3" fill="#f0e8dc" opacity="0.36"/><circle cx="39.8" cy="23.8" r="0.9" fill="#6a5030" opacity="0.43"/><circle cx="73.1" cy="40.3" r="1.1" fill="#7a5a3a" opacity="0.48"/><circle cx="16.9" cy="20.0" r="1.0" fill="#f0e8dc" opacity="0.60"/><circle cx="52.1" cy="31.9" r="0.6" fill="#a07850" opacity="0.54"/><circle cx="23.3" cy="26.4" r="0.7" fill="#eadfca" opacity="0.47"/><circle cx="43.8" cy="26.5" r="1.4" fill="#7a5a3a" opacity="0.39"/><circle cx="78.8" cy="53.9" r="1.1" fill="#7a5a3a" opacity="0.64"/><circle cx="79.9" cy="45.3" r="1.3" fill="#eadfca" opacity="0.60"/><circle cx="13.7" cy="19.3" r="1.4" fill="#a07850" opacity="0.64"/><circle cx="33.0" cy="46.5" r="0.6" fill="#f0e8dc" opacity="0.39"/><circle cx="51.4" cy="30.9" r="1.3" fill="#f0e8dc" opacity="0.48"/><circle cx="69.4" cy="33.1" r="1.2" fill="#a07850" opacity="0.40"/><circle cx="27.5" cy="52.0" r="0.6" fill="#eadfca" opacity="0.36"/><circle cx="64.7" cy="24.5" r="1.2" fill="#6a5030" opacity="0.56"/><circle cx="21.0" cy="43.9" r="1.1" fill="#a07850" opacity="0.32"/><circle cx="56.2" cy="45.8" r="1.3" fill="#7a5a3a" opacity="0.34"/><circle cx="22.0" cy="54.2" r="0.6" fill="#f0e8dc" opacity="0.56"/><circle cx="15.1" cy="37.8" r="1.1" fill="#6a5030" opacity="0.56"/><circle cx="26.2" cy="19.5" r="0.6" fill="#7a5a3a" opacity="0.33"/><circle cx="70.5" cy="41.2" r="1.0" fill="#f0e8dc" opacity="0.49"/><circle cx="67.0" cy="33.7" r="0.7" fill="#eadfca" opacity="0.32"/><circle cx="68.9" cy="32.6" r="0.5" fill="#a07850" opacity="0.48"/><path d="M40 18L45 17L46 25L41 26Z" fill="#d04838"/><path d="M40.5 15H44V18H40.5Z" fill="#40404a"/><path d="M48 15L52 14L53 20L49 21Z" fill="#d85848"/><rect x="69.5" y="2" width="0.8" height="15" fill="#8a8a8a"/></svg><div class="lbl" style="background:rgba(36,36,36,.78)">QHD 2K</div></div>
<div class="t" style="left:251.5px;top:170.3px;line-height:10.5px">Final run #1&nbsp; MAXIAVALANCHE ALPE D'HUEZ 2020 (round #1) Mass start<br>race.webm</div>
<div class="a btn" style="left:252px;top:213px;width:57px">Open Folder</div>
<div class="a btn" style="left:314px;top:213px;width:41px">Preview</div>
<div class="t" style="right:215px;top:170.2px">21:52</div>
<div class="t gray" style="right:152px;top:170.2px">1,418,558 KB</div>
<div class="t" style="right:152px;top:182.5px">126,300 KB</div>
<div class="t" style="left:657.3px;top:170.2px">Downloading: 1729.7 KB/s</div>
<div class="t pct" style="right:10px;top:190.5px">8%</div>
<div class="a btn" style="left:658px;top:213px;width:35px">Pause</div>
<div class="a prog2" style="top:232px;width:59px"></div>
<div class="a card" style="top:240px"></div>
<svg class="a" style="left:120px;top:265px" width="21" height="21"><circle cx="10.5" cy="10.3" r="8.9" fill="none" stroke="#2298ec" stroke-width="1.5"/><path d="M7 5.2L15.8 10.4L7 15.6Z" fill="#2298ec"/></svg>
<div class="a thumb t3" style="top:246px"><svg class="a" style="left:0;top:0" width="101" height="56" viewBox="0 0 101 56"><defs><linearGradient id="g3" x1="0" y1="0" x2="0" y2="1"><stop offset="0" stop-color="#0c1620"/><stop offset="0.2" stop-color="#182a3e"/><stop offset="0.3" stop-color="#22446a"/><stop offset="0.6" stop-color="#1e3e64"/><stop offset="1" stop-color="#16304e"/></linearGradient></defs><rect width="101" height="56" fill="url(#g3)"/><circle cx="46.6" cy="12.7" r="0.5" fill="#3a5870" opacity="0.46"/><circle cx="85.2" cy="6.3" r="0.8" fill="#4a6880" opacity="0.55"/><circle cx="55.7" cy="3.8" r="0.4" fill="#3a5870" opacity="0.39"/><circle cx="53.7" cy="2.2" r="0.6" fill="#28405a" opacity="0.35"/><circle cx="74.0" cy="3.9" r="0.5" fill="#4a6880" opacity="0.31"/><circle cx="47.5" cy="3.4" r="0.7" fill="#4a6880" opacity="0.56"/><circle cx="99.9" cy="5.6" r="0.9" fill="#3a5870" opacity="0.51"/><circle cx="54.6" cy="4.7" r="0.4" fill="#4a6880" opacity="0.50"/><circle cx="28.1" cy="12.1" r="0.7" fill="#28405a" opacity="0.36"/><circle cx="62.1" cy="4.7" r="0.7" fill="#3a5870" opacity="0.45"/><circle cx="100.9" cy="2.5" r="0.7" fill="#4a6880" opacity="0.62"/><circle cx="80.0" cy="10.2" r="0.4" fill="#3a5870" opacity="0.49"/><circle cx="20.4" cy="9.5" r="0.9" fill="#3a5870" opacity="0.32"/><circle cx="74.7" cy="4.7" r="0.7" fill="#4a6880" opacity="0.61"/><circle cx="84.9" cy="4.7" r="0.7" fill="#4a6880" opacity="0.69"/><circle cx="23.5" cy="12.6" r="0.5" fill="#3a5870" opacity="0.36"/><circle cx="51.7" cy="10.0" r="0.8" fill="#3a5870" opacity="0.55"/><circle cx="26.7" cy="9.1" r="0.7" fill="#28405a" opacity="0.30"/><circle cx="25.5" cy="9.1" r="1.0" fill="#4a6880" opacity="0.57"/><circle cx="47.0" cy="10.4" r="0.7" fill="#4a6880" opacity="0.54"/><circle cx="22.3" cy="4.7" r="0.8" fill="#4a6880" opacity="0.61"/><circle cx="80.6" cy="3.5" r="0.5" fill="#4a6880" opacity="0.60"/><circle cx="97.5" cy="6.7" r="0.5" fill="#4a6880" opacity="0.54"/><circle cx="73.7" cy="13.0" r="0.4" fill="#4a6880" opacity="0.40"/><circle cx="34.7" cy="2.2" r="0.5" fill="#28405a" opacity="0.48"/><circle cx="54.9" cy="6.1" r="0.7" fill="#4a6880" opacity="0.47"/><circle cx="23.2" cy="9.8" r="0.9" fill="#4a6880" opacity="0.66"/><circle cx="51.7" cy="7.3" r="0.5" fill="#3a5870" opacity="0.61"/><circle cx="22.5" cy="6.0" r="0.9" fill="#28405a" opacity="0.61"/><circle cx="58.7" cy="5.5" r="0.7" fill="#4a6880" opacity="0.55"/><circle cx="58.4" cy="1.7" r="0.7" fill="#3a5870" opacity="0.67"/><circle cx="35.7" cy="11.7" r="0.9" fill="#28405a" opacity="0.34"/><circle cx="86.1" cy="5.8" r="0.7" fill="#3a5870" opacity="0.35"/><circle cx="68.2" cy="12.4" r="0.6" fill="#3a5870" opacity="0.66"/><circle cx="55.2" cy="2.7" r="0.5" fill="#28405a" opacity="0.47"/><circle cx="45.6" cy="6.3" r="1.0" fill="#4a6880" opacity="0.52"/><circle cx="67.8" cy="5.1" r="0.7" fill="#3a5870" opacity="0.69"/><circle cx="42.8" cy="2.0" r="0.9" fill="#3a5870" opacity="0.64"/><circle cx="90.6" cy="5.0" r="0.8" fill="#3a5870" opacity="0.43"/><circle cx="44.6" cy="3.6" r="0.7" fill="#28405a" opacity="0.59"/><circle cx="20.1" cy="8.7" r="0.9" fill="#3a5870" opacity="0.67"/><circle cx="81.0" cy="10.8" r="0.4" fill="#4a6880" opacity="0.44"/><circle cx="43.5" cy="5.1" r="0.5" fill="#3a5870" opacity="0.67"/><circle cx="65.2" cy="2.4" r="0.7" fill="#3a5870" opacity="0.51"/><circle cx="52.0" cy="7.9" r="0.9" fill="#28405a" opacity="0.38"/><circle cx="94.7" cy="4.7" r="0.8" fill="#3a5870" opacity="0.47"/><circle cx="82.6" cy="9.6" r="0.9" fill="#28405a" opacity="0.40"/><circle cx="80.5" cy="8.3" r="0.5" fill="#3a5870" opacity="0.65"/><circle cx="47.8" cy="3.0" r="0.6" fill="#3a5870" opacity="0.61"/><circle cx="69.2" cy="1.8" r="0.9" fill="#28405a" opacity="0.42"/><circle cx="59.4" cy="10.3" r="0.7" fill="#3a5870" opacity="0.49"/><circle cx="29.7" cy="3.0" r="0.9" fill="#4a6880" opacity="0.41"/><circle cx="88.6" cy="3.4" r="0.7" fill="#4a6880" opacity="0.44"/><circle cx="49.6" cy="1.1" r="0.7" fill="#4a6880" opacity="0.53"/><circle cx="63.4" cy="1.1" r="0.4" fill="#4a6880" opacity="0.37"/><circle cx="99.5" cy="2.4" r="0.9" fill="#3a5870" opacity="0.59"/><circle cx="97.9" cy="4.8" r="0.6" fill="#3a5870" opacity="0.64"/><circle cx="88.5" cy="11.5" r="1.0" fill="#3a5870" opacity="0.69"/><circle cx="33.4" cy="8.7" r="0.7" fill="#4a6880" opacity="0.60"/><circle cx="84.5" cy="13.0" r="0.8" fill="#28405a" opacity="0.52"/><path d="M0 20C10 18 30 22 40 26C30 30 10 32 0 32Z" fill="#2a4a6a" opacity=".4"/><path d="M7 18.5L17 19.5L17 21L7 21.5L9 20Z" fill="#2e4852"/><path d="M17 19.5C20 16 26 14.5 32 15.5C42 17 52 24 58 30C59.5 33 57.5 35 54 34.5C46 32 36 27.5 28 24.5C22 22.5 19 21.8 17 21Z" fill="#2e4a54"/><path d="M19 18C25 15 33 15 41 18.5C48 21.5 54 26 57 29.5C50 25 42 21 33 18.5C27 17 22 17.5 19 18Z" fill="#7aa4ac"/><path d="M26 23.5C36 26.5 46 31 55 34.5C47 34 36 29 26 25Z" fill="#18262c" opacity=".85"/><circle cx="55" cy="38" r=".7" fill="#a8c0d0"/><circle cx="57.5" cy="40" r=".6" fill="#a8c0d0"/><circle cx="55.5" cy="43" r=".6" fill="#a8c0d0"/><circle cx="53" cy="40.5" r=".5" fill="#a8c0d0"/></svg><div class="lbl" style="background:rgba(8,10,14,.72)">UHD 4K</div></div>
<div class="t" style="left:251.5px;top:246.3px;line-height:10.5px">One Breath Around The World.webm</div>
<div class="a btn" style="left:252px;top:289px;width:57px">Open Folder</div>
<div class="a btn" style="left:314px;top:289px;width:41px">Preview</div>
<div class="t" style="right:215px;top:246.2px">12:41</div>
<div class="t gray" style="right:152px;top:246.2px">1,106,715 KB</div>
<div class="t" style="right:152px;top:258.5px">114,169 KB</div>
<div class="t" style="left:657.3px;top:246.2px">Downloading: 1272.0 KB/s</div>
<div class="t pct" style="right:10px;top:266.5px">10%</div>
<div class="a btn" style="left:658px;top:289px;width:35px">Pause</div>
<div class="a prog2" style="top:308px;width:69px"></div>
<div class="a card" style="top:316px"></div>
<svg class="a" style="left:120px;top:341px" width="21" height="21"><circle cx="10.5" cy="10.3" r="8.9" fill="none" stroke="#2298ec" stroke-width="1.5"/><path d="M7 5.2L15.8 10.4L7 15.6Z" fill="#2298ec"/></svg>
<div class="a thumb t4" style="top:322px"><svg class="a" style="left:0;top:0" width="101" height="56" viewBox="0 0 101 56"><defs><clipPath id="mc"><path d="M36 31C44 25 52 18 60 13C70 8 84 3 92 0H101V34H36Z"/></clipPath><linearGradient id="g4" x1="0" y1="0" x2="1" y2="0.5"><stop offset="0" stop-color="#2456bc"/><stop offset="1" stop-color="#3466cc"/></linearGradient><linearGradient id="g4m" x1="0" y1="1" x2="1" y2="0"><stop offset="0" stop-color="#6a7080"/><stop offset="1" stop-color="#4a505c"/></linearGradient></defs><rect width="101" height="56" fill="url(#g4)"/><path d="M66 0H92C90 4 84 7 76 8C70 7 66 4 66 0Z" fill="#e8eef8"/><path d="M36 31C44 25 52 18 60 13C70 8 84 3 92 0H101V34H36Z" fill="url(#g4m)"/><g clip-path="url(#mc)"><circle cx="41.2" cy="28.5" r="0.6" fill="#e8eef4" opacity="0.38"/><circle cx="42.8" cy="2.7" r="0.8" fill="#c8d0dc" opacity="0.32"/><circle cx="64.6" cy="3.9" r="1.2" fill="#c8d0dc" opacity="0.43"/><circle cx="64.9" cy="31.3" r="0.7" fill="#ffffff" opacity="0.58"/><circle cx="36.9" cy="6.1" r="0.9" fill="#e8eef4" opacity="0.39"/><circle cx="74.1" cy="4.1" r="1.2" fill="#9aa2b0" opacity="0.51"/><circle cx="62.7" cy="15.1" r="1.0" fill="#ffffff" opacity="0.64"/><circle cx="54.3" cy="7.5" r="0.6" fill="#ffffff" opacity="0.48"/><circle cx="61.3" cy="16.7" r="1.1" fill="#ffffff" opacity="0.42"/><circle cx="58.4" cy="24.0" r="0.6" fill="#ffffff" opacity="0.33"/><circle cx="96.3" cy="23.4" r="1.0" fill="#9aa2b0" opacity="0.69"/><circle cx="69.2" cy="26.3" r="1.2" fill="#ffffff" opacity="0.30"/><circle cx="83.7" cy="14.1" r="0.5" fill="#9aa2b0" opacity="0.51"/><circle cx="89.6" cy="8.1" r="1.2" fill="#9aa2b0" opacity="0.61"/><circle cx="84.2" cy="27.1" r="1.3" fill="#e8eef4" opacity="0.64"/><circle cx="40.7" cy="15.5" r="0.9" fill="#c8d0dc" opacity="0.38"/><circle cx="53.1" cy="4.3" r="0.9" fill="#ffffff" opacity="0.30"/><circle cx="47.6" cy="6.4" r="1.3" fill="#9aa2b0" opacity="0.57"/><circle cx="43.7" cy="11.8" r="0.7" fill="#e8eef4" opacity="0.30"/><circle cx="64.6" cy="15.6" r="0.5" fill="#ffffff" opacity="0.61"/><circle cx="47.6" cy="14.7" r="1.0" fill="#ffffff" opacity="0.64"/><circle cx="69.7" cy="11.0" r="0.6" fill="#e8eef4" opacity="0.45"/><circle cx="70.9" cy="11.1" r="0.5" fill="#e8eef4" opacity="0.49"/><circle cx="57.2" cy="5.5" r="0.8" fill="#c8d0dc" opacity="0.49"/><circle cx="69.1" cy="17.2" r="0.5" fill="#c8d0dc" opacity="0.57"/><circle cx="56.7" cy="18.3" r="0.9" fill="#ffffff" opacity="0.64"/><circle cx="89.2" cy="18.5" r="0.6" fill="#9aa2b0" opacity="0.57"/><circle cx="62.3" cy="14.8" r="0.8" fill="#e8eef4" opacity="0.67"/><circle cx="81.4" cy="19.8" r="1.3" fill="#ffffff" opacity="0.47"/><circle cx="59.7" cy="0.3" r="1.3" fill="#e8eef4" opacity="0.46"/><circle cx="38.9" cy="22.1" r="0.8" fill="#c8d0dc" opacity="0.57"/><circle cx="90.9" cy="1.4" r="0.7" fill="#ffffff" opacity="0.37"/><circle cx="95.0" cy="11.1" r="0.8" fill="#e8eef4" opacity="0.67"/><circle cx="81.2" cy="11.4" r="0.9" fill="#9aa2b0" opacity="0.45"/><circle cx="59.1" cy="19.7" r="0.7" fill="#e8eef4" opacity="0.40"/><circle cx="46.2" cy="8.4" r="0.6" fill="#9aa2b0" opacity="0.69"/><circle cx="85.4" cy="16.9" r="1.2" fill="#9aa2b0" opacity="0.65"/><circle cx="46.7" cy="26.5" r="1.2" fill="#9aa2b0" opacity="0.60"/><circle cx="61.5" cy="6.6" r="1.0" fill="#c8d0dc" opacity="0.65"/><circle cx="79.0" cy="11.6" r="1.1" fill="#ffffff" opacity="0.42"/><circle cx="94.8" cy="21.2" r="0.8" fill="#9aa2b0" opacity="0.36"/><circle cx="58.4" cy="2.4" r="1.3" fill="#ffffff" opacity="0.65"/><circle cx="85.3" cy="8.9" r="0.7" fill="#9aa2b0" opacity="0.56"/><circle cx="49.9" cy="23.1" r="0.9" fill="#ffffff" opacity="0.65"/><circle cx="53.1" cy="7.9" r="1.2" fill="#e8eef4" opacity="0.69"/><circle cx="43.2" cy="18.3" r="1.3" fill="#9aa2b0" opacity="0.64"/><circle cx="38.0" cy="25.4" r="1.0" fill="#ffffff" opacity="0.42"/><circle cx="59.2" cy="23.8" r="0.6" fill="#c8d0dc" opacity="0.62"/><circle cx="66.7" cy="24.2" r="0.8" fill="#c8d0dc" opacity="0.36"/><circle cx="91.8" cy="24.4" r="1.1" fill="#e8eef4" opacity="0.38"/><circle cx="59.1" cy="31.6" r="1.0" fill="#e8eef4" opacity="0.52"/><circle cx="64.1" cy="3.7" r="0.8" fill="#9aa2b0" opacity="0.63"/><circle cx="59.1" cy="28.7" r="0.8" fill="#e8eef4" opacity="0.49"/><circle cx="48.6" cy="21.8" r="0.9" fill="#e8eef4" opacity="0.41"/><circle cx="40.4" cy="7.5" r="0.9" fill="#ffffff" opacity="0.60"/><circle cx="89.7" cy="18.5" r="1.0" fill="#ffffff" opacity="0.65"/><circle cx="39.2" cy="2.4" r="1.0" fill="#c8d0dc" opacity="0.38"/><circle cx="50.6" cy="25.4" r="0.7" fill="#c8d0dc" opacity="0.51"/><circle cx="41.6" cy="12.6" r="0.9" fill="#e8eef4" opacity="0.66"/><circle cx="89.3" cy="6.6" r="1.1" fill="#9aa2b0" opacity="0.61"/><circle cx="43.1" cy="2.8" r="0.6" fill="#ffffff" opacity="0.57"/><circle cx="91.1" cy="5.9" r="0.6" fill="#ffffff" opacity="0.33"/><circle cx="67.6" cy="21.1" r="0.6" fill="#c8d0dc" opacity="0.56"/><circle cx="54.1" cy="28.4" r="0.5" fill="#c8d0dc" opacity="0.55"/><circle cx="89.4" cy="11.3" r="0.6" fill="#c8d0dc" opacity="0.36"/><circle cx="76.3" cy="14.4" r="1.1" fill="#c8d0dc" opacity="0.65"/><circle cx="91.6" cy="26.8" r="0.9" fill="#ffffff" opacity="0.58"/><circle cx="72.2" cy="13.6" r="0.5" fill="#e8eef4" opacity="0.48"/><circle cx="68.6" cy="7.6" r="0.8" fill="#c8d0dc" opacity="0.39"/><circle cx="93.6" cy="30.7" r="0.7" fill="#c8d0dc" opacity="0.49"/></g><path d="M54 33C62 26 74 20 86 14C92 11 97 8 101 6V34Z" fill="#dfe3ea" opacity=".85"/><path d="M0 18C6 17 12 20 18 23C26 26 32 29 42 29C50 29 56 30 62 32V35H0Z" fill="#e4e8ee" opacity=".95"/><rect x="0" y="14" width="2" height="20" fill="#505868"/><path d="M0 33C16 30 40 31 60 32C80 33 92 31 101 30V56H0Z" fill="#5c5e64"/><circle cx="87.3" cy="53.4" r="1.3" fill="#d8dce2" opacity="0.70"/><circle cx="11.5" cy="37.6" r="0.8" fill="#9a9ea6" opacity="0.44"/><circle cx="93.8" cy="32.7" r="1.3" fill="#9a9ea6" opacity="0.56"/><circle cx="61.3" cy="53.8" r="0.8" fill="#f0f2f6" opacity="0.55"/><circle cx="84.1" cy="34.6" r="1.2" fill="#40424a" opacity="0.69"/><circle cx="2.1" cy="40.6" r="0.5" fill="#9a9ea6" opacity="0.53"/><circle cx="2.8" cy="38.8" r="1.1" fill="#f0f2f6" opacity="0.72"/><circle cx="86.3" cy="51.7" r="1.1" fill="#f0f2f6" opacity="0.43"/><circle cx="34.7" cy="52.3" r="0.8" fill="#d8dce2" opacity="0.56"/><circle cx="58.5" cy="45.1" r="1.0" fill="#9a9ea6" opacity="0.59"/><circle cx="8.3" cy="46.0" r="0.9" fill="#40424a" opacity="0.88"/><circle cx="39.3" cy="55.1" r="1.0" fill="#40424a" opacity="0.67"/><circle cx="31.8" cy="37.9" r="0.7" fill="#40424a" opacity="0.60"/><circle cx="96.4" cy="47.2" r="0.7" fill="#9a9ea6" opacity="0.48"/><circle cx="69.1" cy="47.9" r="1.0" fill="#9a9ea6" opacity="0.49"/><circle cx="98.5" cy="40.9" r="1.1" fill="#40424a" opacity="0.80"/><circle cx="75.0" cy="44.3" r="0.7" fill="#f0f2f6" opacity="0.67"/><circle cx="79.8" cy="39.3" r="1.1" fill="#40424a" opacity="0.71"/><circle cx="31.9" cy="34.5" r="1.2" fill="#f0f2f6" opacity="0.71"/><circle cx="26.2" cy="43.1" r="0.6" fill="#9a9ea6" opacity="0.63"/><circle cx="57.6" cy="46.6" r="0.9" fill="#d8dce2" opacity="0.69"/><circle cx="72.3" cy="37.1" r="0.9" fill="#d8dce2" opacity="0.77"/><circle cx="59.0" cy="38.9" r="1.1" fill="#d8dce2" opacity="0.47"/><circle cx="89.8" cy="49.4" r="0.5" fill="#f0f2f6" opacity="0.66"/><circle cx="61.9" cy="41.0" r="1.2" fill="#d8dce2" opacity="0.48"/><circle cx="0.5" cy="55.1" r="0.8" fill="#d8dce2" opacity="0.52"/><circle cx="84.4" cy="48.4" r="1.0" fill="#d8dce2" opacity="0.74"/><circle cx="35.6" cy="47.7" r="1.3" fill="#2a2c30" opacity="0.71"/><circle cx="31.3" cy="47.4" r="1.0" fill="#40424a" opacity="0.54"/><circle cx="33.3" cy="32.1" r="0.8" fill="#d8dce2" opacity="0.84"/><circle cx="95.1" cy="32.2" r="0.7" fill="#2a2c30" opacity="0.69"/><circle cx="7.0" cy="47.1" r="0.5" fill="#d8dce2" opacity="0.55"/><circle cx="93.3" cy="53.5" r="0.6" fill="#f0f2f6" opacity="0.52"/><circle cx="43.9" cy="44.0" r="0.6" fill="#d8dce2" opacity="0.52"/><circle cx="1.9" cy="48.6" r="0.8" fill="#40424a" opacity="0.42"/><circle cx="22.9" cy="33.8" r="0.6" fill="#9a9ea6" opacity="0.59"/><circle cx="84.5" cy="51.9" r="0.6" fill="#2a2c30" opacity="0.59"/><circle cx="33.6" cy="34.4" r="1.2" fill="#f0f2f6" opacity="0.44"/><circle cx="84.6" cy="40.4" r="0.6" fill="#9a9ea6" opacity="0.63"/><circle cx="30.8" cy="43.1" r="0.7" fill="#d8dce2" opacity="0.60"/><circle cx="19.4" cy="51.7" r="1.2" fill="#40424a" opacity="0.52"/><circle cx="31.9" cy="47.4" r="0.6" fill="#40424a" opacity="0.66"/><circle cx="71.0" cy="52.7" r="0.7" fill="#2a2c30" opacity="0.80"/><circle cx="76.3" cy="33.8" r="1.2" fill="#f0f2f6" opacity="0.76"/><circle cx="24.8" cy="38.7" r="0.7" fill="#2a2c30" opacity="0.63"/><circle cx="91.1" cy="40.0" r="0.7" fill="#40424a" opacity="0.62"/><circle cx="100.8" cy="52.5" r="1.2" fill="#9a9ea6" opacity="0.75"/><circle cx="26.3" cy="54.4" r="0.7" fill="#f0f2f6" opacity="0.55"/><circle cx="20.0" cy="53.9" r="0.8" fill="#d8dce2" opacity="0.64"/><circle cx="11.8" cy="43.9" r="0.6" fill="#9a9ea6" opacity="0.43"/><circle cx="6.2" cy="46.7" r="0.5" fill="#9a9ea6" opacity="0.55"/><circle cx="90.6" cy="36.3" r="0.9" fill="#9a9ea6" opacity="0.90"/><circle cx="31.8" cy="55.7" r="1.0" fill="#40424a" opacity="0.51"/><circle cx="31.4" cy="39.7" r="1.2" fill="#d8dce2" opacity="0.80"/><circle cx="23.5" cy="55.5" r="0.6" fill="#40424a" opacity="0.90"/><circle cx="10.9" cy="35.3" r="0.5" fill="#f0f2f6" opacity="0.53"/><circle cx="32.4" cy="37.0" r="0.8" fill="#d8dce2" opacity="0.85"/><circle cx="12.0" cy="42.2" r="1.1" fill="#9a9ea6" opacity="0.76"/><circle cx="16.2" cy="44.1" r="0.7" fill="#2a2c30" opacity="0.71"/><circle cx="70.7" cy="33.4" r="0.7" fill="#f0f2f6" opacity="0.82"/><circle cx="56.1" cy="38.8" r="1.3" fill="#9a9ea6" opacity="0.85"/><circle cx="35.5" cy="37.3" r="0.6" fill="#9a9ea6" opacity="0.79"/><circle cx="61.4" cy="33.8" r="0.5" fill="#f0f2f6" opacity="0.88"/><circle cx="97.6" cy="50.4" r="0.7" fill="#2a2c30" opacity="0.78"/><circle cx="64.5" cy="44.4" r="0.5" fill="#40424a" opacity="0.52"/><circle cx="75.7" cy="46.5" r="0.9" fill="#f0f2f6" opacity="0.72"/><circle cx="64.5" cy="50.2" r="1.1" fill="#f0f2f6" opacity="0.63"/><circle cx="34.5" cy="55.0" r="1.1" fill="#2a2c30" opacity="0.81"/><circle cx="25.4" cy="44.8" r="0.8" fill="#40424a" opacity="0.45"/><circle cx="58.3" cy="38.1" r="1.1" fill="#40424a" opacity="0.45"/><circle cx="44.9" cy="39.1" r="0.9" fill="#40424a" opacity="0.54"/><circle cx="5.3" cy="42.3" r="1.2" fill="#2a2c30" opacity="0.48"/><circle cx="24.2" cy="36.9" r="0.8" fill="#d8dce2" opacity="0.41"/><circle cx="49.4" cy="42.2" r="1.0" fill="#f0f2f6" opacity="0.75"/><circle cx="38.0" cy="40.8" r="1.1" fill="#40424a" opacity="0.43"/><circle cx="51.9" cy="44.1" r="0.6" fill="#9a9ea6" opacity="0.48"/><circle cx="31.7" cy="33.5" r="1.3" fill="#40424a" opacity="0.66"/><circle cx="40.3" cy="40.4" r="0.8" fill="#9a9ea6" opacity="0.40"/><circle cx="1.9" cy="42.8" r="0.8" fill="#2a2c30" opacity="0.82"/><circle cx="43.7" cy="34.6" r="1.0" fill="#d8dce2" opacity="0.57"/><circle cx="11.2" cy="53.0" r="1.2" fill="#40424a" opacity="0.89"/><circle cx="56.1" cy="48.2" r="1.0" fill="#f0f2f6" opacity="0.55"/><circle cx="21.0" cy="45.1" r="1.0" fill="#2a2c30" opacity="0.72"/><circle cx="79.2" cy="40.5" r="1.0" fill="#9a9ea6" opacity="0.59"/><circle cx="36.6" cy="38.9" r="1.2" fill="#2a2c30" opacity="0.77"/><circle cx="42.3" cy="40.7" r="1.2" fill="#f0f2f6" opacity="0.45"/><circle cx="88.4" cy="42.3" r="0.9" fill="#40424a" opacity="0.66"/><circle cx="36.0" cy="54.2" r="0.8" fill="#2a2c30" opacity="0.48"/><circle cx="91.9" cy="33.2" r="0.5" fill="#2a2c30" opacity="0.59"/><circle cx="53.5" cy="46.1" r="1.1" fill="#2a2c30" opacity="0.40"/><circle cx="84.4" cy="52.6" r="0.7" fill="#40424a" opacity="0.71"/><circle cx="30.7" cy="50.0" r="0.8" fill="#40424a" opacity="0.80"/><circle cx="40.2" cy="40.6" r="1.1" fill="#f0f2f6" opacity="0.87"/><circle cx="24.0" cy="36.6" r="1.2" fill="#9a9ea6" opacity="0.46"/><circle cx="78.3" cy="54.3" r="0.7" fill="#f0f2f6" opacity="0.55"/><circle cx="79.5" cy="44.2" r="0.9" fill="#d8dce2" opacity="0.61"/><circle cx="38.2" cy="43.2" r="0.7" fill="#f0f2f6" opacity="0.45"/><circle cx="26.2" cy="55.9" r="1.1" fill="#d8dce2" opacity="0.77"/><circle cx="13.5" cy="41.3" r="1.3" fill="#d8dce2" opacity="0.81"/><circle cx="71.8" cy="50.3" r="1.2" fill="#f0f2f6" opacity="0.57"/><circle cx="60.4" cy="34.9" r="1.0" fill="#40424a" opacity="0.58"/><circle cx="94.3" cy="48.3" r="0.9" fill="#40424a" opacity="0.75"/><circle cx="87.7" cy="53.0" r="0.9" fill="#40424a" opacity="0.44"/><circle cx="93.9" cy="47.2" r="1.0" fill="#d8dce2" opacity="0.55"/><circle cx="32.5" cy="52.8" r="0.8" fill="#40424a" opacity="0.77"/><circle cx="30.5" cy="38.7" r="0.7" fill="#40424a" opacity="0.63"/><circle cx="15.7" cy="40.5" r="1.0" fill="#2a2c30" opacity="0.81"/><circle cx="8.6" cy="45.6" r="0.8" fill="#9a9ea6" opacity="0.55"/><circle cx="87.8" cy="54.6" r="0.9" fill="#d8dce2" opacity="0.87"/><circle cx="77.2" cy="44.6" r="1.1" fill="#40424a" opacity="0.65"/><circle cx="54.6" cy="34.8" r="1.0" fill="#9a9ea6" opacity="0.68"/><circle cx="49.7" cy="42.0" r="1.0" fill="#2a2c30" opacity="0.52"/><circle cx="74.0" cy="54.3" r="1.2" fill="#f0f2f6" opacity="0.44"/><circle cx="96.4" cy="41.8" r="0.7" fill="#9a9ea6" opacity="0.59"/><circle cx="20.3" cy="32.0" r="1.1" fill="#d8dce2" opacity="0.79"/><circle cx="34.5" cy="34.6" r="0.9" fill="#f0f2f6" opacity="0.49"/><circle cx="59.1" cy="45.2" r="0.8" fill="#f0f2f6" opacity="0.73"/><circle cx="91.5" cy="46.3" r="1.3" fill="#f0f2f6" opacity="0.88"/><circle cx="75.9" cy="45.1" r="0.9" fill="#40424a" opacity="0.86"/><circle cx="1.9" cy="42.6" r="0.9" fill="#d8dce2" opacity="0.45"/><circle cx="99.1" cy="41.0" r="1.3" fill="#40424a" opacity="0.54"/><circle cx="21.5" cy="53.3" r="1.3" fill="#40424a" opacity="0.64"/><circle cx="75.5" cy="55.3" r="0.9" fill="#40424a" opacity="0.54"/><circle cx="83.5" cy="54.9" r="1.0" fill="#d8dce2" opacity="0.84"/><circle cx="24.2" cy="54.6" r="0.8" fill="#f0f2f6" opacity="0.75"/><circle cx="15.3" cy="44.6" r="1.1" fill="#9a9ea6" opacity="0.85"/><circle cx="26.7" cy="44.0" r="1.3" fill="#d8dce2" opacity="0.82"/><circle cx="61.3" cy="41.3" r="1.1" fill="#9a9ea6" opacity="0.75"/><circle cx="83.6" cy="51.4" r="0.5" fill="#9a9ea6" opacity="0.75"/><circle cx="87.3" cy="51.6" r="1.0" fill="#40424a" opacity="0.67"/><circle cx="10.9" cy="38.8" r="1.2" fill="#2a2c30" opacity="0.51"/><circle cx="97.4" cy="53.2" r="0.6" fill="#f0f2f6" opacity="0.53"/><circle cx="76.3" cy="52.2" r="0.5" fill="#9a9ea6" opacity="0.67"/><circle cx="53.2" cy="33.7" r="1.0" fill="#d8dce2" opacity="0.42"/><circle cx="44.2" cy="38.6" r="0.7" fill="#2a2c30" opacity="0.73"/><circle cx="84.7" cy="48.2" r="0.9" fill="#2a2c30" opacity="0.81"/><circle cx="87.2" cy="40.8" r="0.8" fill="#f0f2f6" opacity="0.43"/><circle cx="46.0" cy="54.9" r="1.2" fill="#2a2c30" opacity="0.88"/><circle cx="2.2" cy="51.5" r="0.7" fill="#d8dce2" opacity="0.85"/><circle cx="26.8" cy="48.5" r="1.1" fill="#9a9ea6" opacity="0.89"/><circle cx="59.5" cy="46.8" r="0.6" fill="#9a9ea6" opacity="0.88"/><circle cx="28.7" cy="36.2" r="0.9" fill="#40424a" opacity="0.55"/><circle cx="89.1" cy="45.1" r="0.8" fill="#d8dce2" opacity="0.64"/><circle cx="20.0" cy="42.9" r="0.9" fill="#f0f2f6" opacity="0.55"/><circle cx="34.5" cy="43.8" r="0.9" fill="#2a2c30" opacity="0.46"/><circle cx="23.0" cy="49.5" r="0.9" fill="#9a9ea6" opacity="0.88"/><circle cx="51.1" cy="42.4" r="0.6" fill="#9a9ea6" opacity="0.90"/><circle cx="69.5" cy="53.9" r="1.0" fill="#2a2c30" opacity="0.44"/><circle cx="28.5" cy="55.1" r="0.9" fill="#d8dce2" opacity="0.89"/><circle cx="19.1" cy="49.3" r="1.3" fill="#40424a" opacity="0.58"/><circle cx="45.5" cy="45.0" r="1.1" fill="#2a2c30" opacity="0.59"/><circle cx="3.7" cy="48.2" r="0.5" fill="#d8dce2" opacity="0.60"/><circle cx="81.8" cy="34.0" r="0.6" fill="#9a9ea6" opacity="0.47"/><circle cx="27.4" cy="47.0" r="0.6" fill="#f0f2f6" opacity="0.52"/><circle cx="100.0" cy="34.5" r="1.2" fill="#d8dce2" opacity="0.54"/><circle cx="76.8" cy="50.1" r="1.0" fill="#40424a" opacity="0.55"/><circle cx="60.5" cy="33.0" r="0.7" fill="#f0f2f6" opacity="0.63"/><circle cx="90.5" cy="39.5" r="0.9" fill="#40424a" opacity="0.50"/><circle cx="40.5" cy="42.3" r="1.1" fill="#40424a" opacity="0.67"/><circle cx="45.6" cy="48.7" r="1.2" fill="#9a9ea6" opacity="0.51"/><circle cx="91.9" cy="43.3" r="0.9" fill="#d8dce2" opacity="0.69"/><circle cx="18.7" cy="41.7" r="0.8" fill="#2a2c30" opacity="0.52"/><circle cx="29.2" cy="38.9" r="0.9" fill="#2a2c30" opacity="0.66"/><circle cx="53.8" cy="53.4" r="0.8" fill="#40424a" opacity="0.74"/><circle cx="74.0" cy="49.4" r="0.8" fill="#9a9ea6" opacity="0.58"/><circle cx="70.9" cy="35.7" r="0.5" fill="#2a2c30" opacity="0.43"/><circle cx="79.2" cy="53.6" r="1.3" fill="#d8dce2" opacity="0.46"/><circle cx="99.7" cy="37.2" r="1.0" fill="#2a2c30" opacity="0.49"/><circle cx="22.0" cy="32.7" r="0.7" fill="#40424a" opacity="0.50"/><circle cx="2.2" cy="41.3" r="0.5" fill="#2a2c30" opacity="0.57"/><circle cx="17.7" cy="42.5" r="0.8" fill="#2a2c30" opacity="0.74"/><circle cx="22.3" cy="36.5" r="0.6" fill="#f0f2f6" opacity="0.58"/><circle cx="57.1" cy="47.9" r="0.8" fill="#f0f2f6" opacity="0.62"/><circle cx="75.3" cy="48.0" r="0.8" fill="#9a9ea6" opacity="0.42"/><circle cx="47.6" cy="52.7" r="1.2" fill="#f0f2f6" opacity="0.67"/><circle cx="7.6" cy="46.4" r="0.9" fill="#40424a" opacity="0.43"/><circle cx="97.5" cy="36.1" r="1.3" fill="#2a2c30" opacity="0.51"/><circle cx="29.5" cy="35.5" r="1.2" fill="#40424a" opacity="0.88"/><circle cx="81.5" cy="40.6" r="1.1" fill="#2a2c30" opacity="0.43"/><circle cx="16.9" cy="51.5" r="1.2" fill="#40424a" opacity="0.81"/><circle cx="28.2" cy="32.8" r="1.3" fill="#40424a" opacity="0.69"/><circle cx="29.9" cy="53.1" r="1.2" fill="#d8dce2" opacity="0.77"/><circle cx="96.7" cy="35.9" r="0.9" fill="#f0f2f6" opacity="0.81"/><circle cx="29.6" cy="37.3" r="0.9" fill="#9a9ea6" opacity="0.88"/><circle cx="34.2" cy="47.5" r="0.8" fill="#2a2c30" opacity="0.84"/><circle cx="77.2" cy="44.7" r="0.5" fill="#40424a" opacity="0.71"/><circle cx="89.8" cy="44.8" r="0.9" fill="#2a2c30" opacity="0.80"/><circle cx="86.4" cy="44.9" r="0.6" fill="#f0f2f6" opacity="0.67"/><circle cx="58.7" cy="54.1" r="1.1" fill="#2a2c30" opacity="0.73"/><circle cx="14.1" cy="39.6" r="0.5" fill="#9a9ea6" opacity="0.52"/><circle cx="51.4" cy="33.4" r="1.1" fill="#9a9ea6" opacity="0.58"/><circle cx="69.6" cy="43.1" r="1.1" fill="#d8dce2" opacity="0.63"/><circle cx="73.4" cy="37.6" r="1.3" fill="#9a9ea6" opacity="0.68"/><circle cx="1.1" cy="40.5" r="0.5" fill="#f0f2f6" opacity="0.45"/><circle cx="15.1" cy="54.4" r="1.2" fill="#f0f2f6" opacity="0.54"/><circle cx="50.9" cy="35.2" r="0.9" fill="#d8dce2" opacity="0.88"/><circle cx="11.0" cy="47.9" r="0.7" fill="#d8dce2" opacity="0.65"/><circle cx="72.9" cy="50.6" r="0.6" fill="#d8dce2" opacity="0.67"/><circle cx="100.6" cy="39.3" r="0.5" fill="#40424a" opacity="0.41"/><circle cx="80.9" cy="48.7" r="0.8" fill="#2a2c30" opacity="0.80"/><path d="M0 39C8 37 16 41 22 48L25 56H0Z" fill="#c4946a"/><path d="M18 37C20 31 28 30 31 36Z" fill="#8c7262"/><path d="M54 56C58 48 66 42 75 42C84 42 92 50 96 56Z" fill="#d8b67a"/></svg><div class="lbl" style="background:rgba(18,32,70,.82)">HD 1080</div></div>
<div class="t" style="left:251.5px;top:322.3px;line-height:10.5px">Mt. Everest Climb from North Side 2016.mp4</div>
<div class="a btn" style="left:252px;top:365px;width:57px">Open Folder</div>
<div class="a btn" style="left:314px;top:365px;width:41px">Preview</div>
<div class="t" style="right:215px;top:322.2px">56:46</div>
<div class="t gray" style="right:152px;top:322.2px">982,095 KB</div>
<div class="t" style="right:152px;top:334.5px">159,028 KB</div>
<div class="t" style="left:657.3px;top:322.2px">Downloading: 4840.0 KB/s</div>
<div class="t pct" style="right:10px;top:342.5px">16%</div>
<div class="a btn" style="left:658px;top:365px;width:35px">Pause</div>
<div class="a prog2" style="top:384px;width:109px"></div>
<div class="t" style="left:5px;top:432.5px;color:#222">Ready</div>
<svg class="a" style="left:441px;top:433px" width="12" height="10"><g fill="#6a6a6a"><rect x="0" y="0" width="2" height="1.3"/><rect x="3" y="0" width="9" height="1.3"/><rect x="0" y="4" width="2" height="1.3"/><rect x="3" y="4" width="9" height="1.3"/><rect x="0" y="8" width="2" height="1.3"/><rect x="3" y="8" width="9" height="1.3"/></g></svg>
<div class="t" style="left:456px;top:432.5px">4 downloads: 4 processing</div>
<svg class="a" style="left:637px;top:431px" width="12" height="14"><path d="M2 0C5 1 7 3 7.5 6.5H10.2L5.8 13L1.2 6.5H4C4 4 3.5 1.8 2 0Z" fill="#737373"/></svg>
<div class="t" style="left:651.5px;top:432.5px">Speed: 9830.37 KB/s</div>
<svg class="a" style="left:0;top:0" width="800" height="447"><path d="M655.5 411.5L686 380.3L716 399.8L746 379.8L776.5 398.8" fill="none" stroke="#f47920" stroke-width="6.8" stroke-linecap="round" stroke-linejoin="round"/></svg>
<div class="t" style="left:661px;top:413px;font-size:19.5px;line-height:20px;letter-spacing:-0.05px;font-weight:bold;color:#f47920;text-shadow:1px 1px 1px rgba(80,40,0,.35)">Mazterize.in</div>
</body></html>
